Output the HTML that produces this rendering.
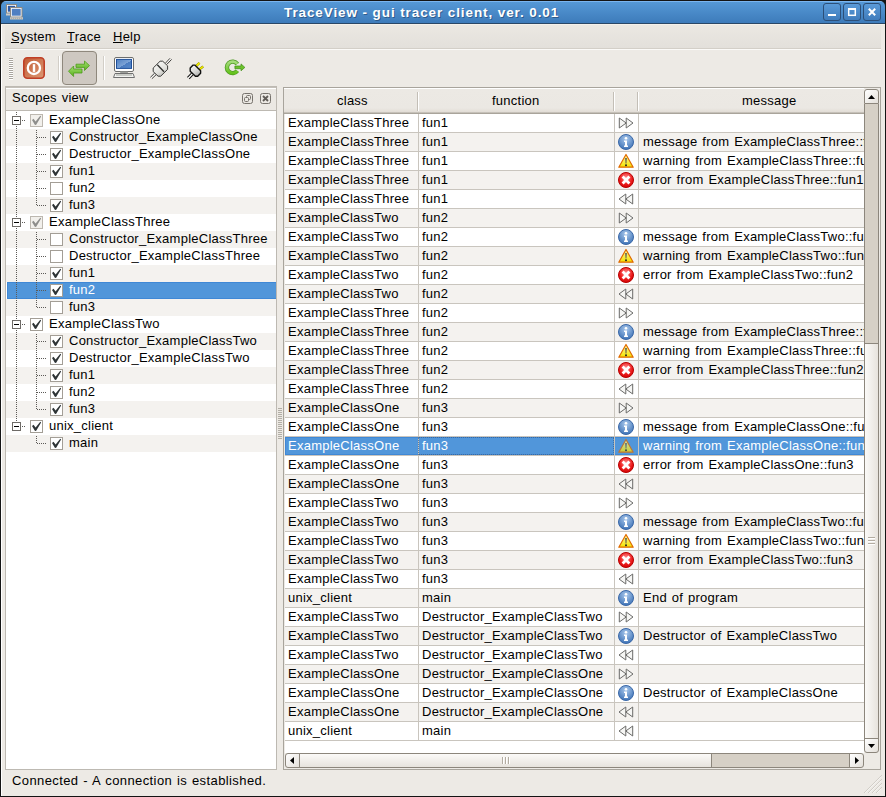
<!DOCTYPE html><html><head><meta charset="utf-8"><title>TraceView</title><style>
*{margin:0;padding:0;box-sizing:border-box}
html,body{width:886px;height:797px;overflow:hidden;background:#141414}
body{position:relative;font-family:"Liberation Sans",sans-serif;font-size:13px;color:#000;letter-spacing:0.25px;word-spacing:1px}
.a{position:absolute}
.t{position:absolute;white-space:pre;line-height:15px}
svg{position:absolute;overflow:visible}
.cb{position:absolute;width:13px;height:13px;border:1px solid #a39e96;background:#fff}
.cbg{position:absolute;width:13px;height:13px;border:1px solid #bdb8b0;background:#f2f0ec}
</style></head><body><div class="a" style="left:1px;top:24px;width:884px;height:772px;background:#edeae5"></div>
<div class="a" style="left:1px;top:24px;width:1px;height:772px;background:#fff"></div>
<div class="a" style="left:1px;top:1px;width:884px;height:23px;border-radius:5px 5px 0 0;background:linear-gradient(#7ab5ef 0,#7ab5ef 1px,#5598d6 1px,#3d7bba 22px,#2a4766 22px)"></div>
<div class="t" style="left:284px;top:5px;font-weight:bold;font-size:13.5px;color:#fff;letter-spacing:0.9px;word-spacing:0px;line-height:16px;text-shadow:1px 1px 0 rgba(20,40,70,0.45)">TraceView - gui tracer client, ver. 0.01</div>
<div class="a" style="left:823px;top:3px;width:18px;height:18px;border:1px solid #2c4f78;border-radius:3px;background:linear-gradient(#5a9ad8,#3f7cbc)"></div>
<div class="a" style="left:843px;top:3px;width:18px;height:18px;border:1px solid #2c4f78;border-radius:3px;background:linear-gradient(#5a9ad8,#3f7cbc)"></div>
<div class="a" style="left:863px;top:3px;width:18px;height:18px;border:1px solid #2c4f78;border-radius:3px;background:linear-gradient(#5a9ad8,#3f7cbc)"></div>
<div class="a" style="left:828px;top:14px;width:8px;height:2px;background:#fff"></div>
<svg style="left:848px;top:8px" width="8" height="8"><rect x="0.7" y="0.9" width="6.6" height="6.4" fill="none" stroke="#fff" stroke-width="1.5"/><path d="M0 1H8" stroke="#fff" stroke-width="2"/></svg>
<svg style="left:868px;top:8px" width="8" height="8"><path d="M0.8 0.8L7.2 7.2M7.2 0.8L0.8 7.2" stroke="#fff" stroke-width="2"/></svg>
<svg style="left:6px;top:4px" width="17" height="16" viewBox="0 0 17 16">
<rect x="0.5" y="0.5" width="10" height="8.5" fill="#fff" stroke="#8d8982"/><rect x="1.8" y="1.8" width="7.4" height="5.9" fill="#2c5aa6"/>
<rect x="0" y="9.5" width="5" height="2" fill="#cfcbc3"/>
<rect x="4.5" y="3.5" width="11.5" height="9.5" fill="#fff" stroke="#8d8982"/><rect x="5.8" y="4.8" width="8.9" height="6.9" fill="#4f7fc2"/>
<rect x="4" y="13.2" width="13" height="2.3" fill="#c9c5bd"/><path d="M5 14.3H16" stroke="#9a968f" stroke-width="0.6" stroke-dasharray="1 1"/></svg>
<div class="a" style="left:1px;top:24px;width:884px;height:1px;background:#f5f1ea"></div>
<div class="a" style="left:5px;top:25px;width:876px;height:25px;background:linear-gradient(#ebe8e2 0,#e3e0db 23px,#d3cfc8 23px,#d3cfc8 24px,#fbfaf8 24px)"></div>
<div class="t" style="left:11px;top:29px">System</div>
<div class="a" style="left:11px;top:42px;width:8px;height:1px;background:#000"></div>
<div class="t" style="left:67px;top:29px">Trace</div>
<div class="a" style="left:67px;top:42px;width:7px;height:1px;background:#000"></div>
<div class="t" style="left:113px;top:29px">Help</div>
<div class="a" style="left:113px;top:42px;width:10px;height:1px;background:#000"></div>
<div class="a" style="left:9px;top:58px;width:4px;height:1px;background:#a9a59e"></div><div class="a" style="left:9px;top:59px;width:4px;height:1px;background:#fff"></div><div class="a" style="left:9px;top:60px;width:4px;height:1px;background:#a9a59e"></div><div class="a" style="left:9px;top:61px;width:4px;height:1px;background:#fff"></div><div class="a" style="left:9px;top:62px;width:4px;height:1px;background:#a9a59e"></div><div class="a" style="left:9px;top:63px;width:4px;height:1px;background:#fff"></div><div class="a" style="left:9px;top:64px;width:4px;height:1px;background:#a9a59e"></div><div class="a" style="left:9px;top:65px;width:4px;height:1px;background:#fff"></div><div class="a" style="left:9px;top:66px;width:4px;height:1px;background:#a9a59e"></div><div class="a" style="left:9px;top:67px;width:4px;height:1px;background:#fff"></div><div class="a" style="left:9px;top:68px;width:4px;height:1px;background:#a9a59e"></div><div class="a" style="left:9px;top:69px;width:4px;height:1px;background:#fff"></div><div class="a" style="left:9px;top:70px;width:4px;height:1px;background:#a9a59e"></div><div class="a" style="left:9px;top:71px;width:4px;height:1px;background:#fff"></div><div class="a" style="left:9px;top:72px;width:4px;height:1px;background:#a9a59e"></div><div class="a" style="left:9px;top:73px;width:4px;height:1px;background:#fff"></div><div class="a" style="left:9px;top:74px;width:4px;height:1px;background:#a9a59e"></div><div class="a" style="left:9px;top:75px;width:4px;height:1px;background:#fff"></div><div class="a" style="left:9px;top:76px;width:4px;height:1px;background:#a9a59e"></div><div class="a" style="left:9px;top:77px;width:4px;height:1px;background:#fff"></div><div class="a" style="left:9px;top:78px;width:4px;height:1px;background:#a9a59e"></div><div class="a" style="left:9px;top:79px;width:4px;height:1px;background:#fff"></div>
<div class="a" style="left:58px;top:56px;width:1px;height:24px;background:#d2cec7"></div><div class="a" style="left:59px;top:56px;width:1px;height:24px;background:#fff"></div>
<div class="a" style="left:103px;top:56px;width:1px;height:24px;background:#d2cec7"></div><div class="a" style="left:104px;top:56px;width:1px;height:24px;background:#fff"></div>
<div class="a" style="left:62px;top:51px;width:35px;height:34px;border:1px solid #8f887d;border-radius:4px;background:#cec8c1"></div>
<svg style="left:23px;top:57px" width="22" height="22" viewBox="0 0 22 22">
<defs><linearGradient id="pw" x1="0" y1="0" x2="1" y2="1"><stop offset="0" stop-color="#c25a33"/><stop offset="1" stop-color="#dc9a76"/></linearGradient></defs>
<rect x="0.8" y="0.8" width="20.4" height="20.4" rx="3.5" fill="url(#pw)" stroke="#c03f26" stroke-width="1.6"/>
<circle cx="10.9" cy="10.9" r="6.1" fill="none" stroke="#fff" stroke-width="2.3"/>
<rect x="9.8" y="7.2" width="2.4" height="7.7" fill="#fff"/></svg>
<svg style="left:68px;top:57px" width="22" height="22" viewBox="0 0 22 22">
<defs><linearGradient id="ag" x1="0" y1="0" x2="0" y2="1"><stop offset="0" stop-color="#a4e070"/><stop offset="1" stop-color="#58b01e"/></linearGradient></defs>
<path d="M8 7.2H16.5V4L21.5 8.6L16.5 13.5V10.4H8Z" fill="url(#ag)" stroke="#4c9a1a" stroke-width="0.8" stroke-linejoin="round"/>
<path d="M14 12H5.6V9L0.5 14.2L5.6 19.5V16H14Z" fill="url(#ag)" stroke="#4c9a1a" stroke-width="0.8" stroke-linejoin="round"/></svg>
<svg style="left:113px;top:57px" width="22" height="22" viewBox="0 0 22 22">
<defs><linearGradient id="scr" x1="0" y1="0" x2="1" y2="1"><stop offset="0" stop-color="#4f7fc0"/><stop offset="0.55" stop-color="#7ca3d6"/><stop offset="0.56" stop-color="#4b7cc0"/><stop offset="1" stop-color="#5a8ccc"/></linearGradient></defs>
<rect x="1.5" y="0.5" width="19" height="14" rx="1.5" fill="#fff" stroke="#6e6e6c"/>
<rect x="3.5" y="2.4" width="15" height="9" fill="url(#scr)" stroke="#1f4f9a"/>
<rect x="7.2" y="14.5" width="7.7" height="1.6" fill="#9a9c98"/>
<path d="M2 16.5H20L21.5 20.5H0.5Z" fill="#f4f4f2" stroke="#707070"/>
<path d="M3 18H19" stroke="#b6b9b4" stroke-width="1.4"/></svg>
<svg style="left:150px;top:57px" width="22" height="22" viewBox="0 0 22 22">
<defs><linearGradient id="plg" x1="0.2" y1="0" x2="0.8" y2="1"><stop offset="0" stop-color="#fbfbf9"/><stop offset="0.6" stop-color="#e2e2de"/><stop offset="1" stop-color="#b4b4b0"/></linearGradient></defs>
<path d="M15.6 6L20 1.3M16.9 7.3L21.6 2.4M0.4 20.3L4.6 16.2M1.9 21.7L6 17.8" stroke="#3f3f3d" stroke-width="1"/>
<path d="M16.2 6.7L20.8 1.9M1.1 21L5.3 17" stroke="#fff" stroke-width="0.7"/>
<path d="M10.1 4.2L12.7 4.2L17.6 8.8L17.6 12.4L10.7 19.2L8.1 19.2L3.2 14.6L3.2 11Z" fill="url(#plg)" stroke="#3c3c3a" stroke-width="1"/>
<path d="M7.3 7.8L14 14.8" stroke="#2e2e2c" stroke-width="1.3"/></svg>
<svg style="left:186px;top:57px" width="22" height="22" viewBox="0 0 22 22">
<defs><linearGradient id="plg2" x1="0.2" y1="0" x2="0.8" y2="1"><stop offset="0" stop-color="#f4f4f2"/><stop offset="0.6" stop-color="#d4d4d2"/><stop offset="1" stop-color="#a8a8a6"/></linearGradient></defs>
<path d="M1.4 20.4L5.5 16.2M3.2 21.8L7 17.8" stroke="#1a1a1a" stroke-width="1.1"/>
<path d="M2.3 21.1L6.2 17" stroke="#fff" stroke-width="0.8"/>
<path d="M10.1 9.1L13.5 5.9M13.3 12.4L17.2 9.5" stroke="#8a8400" stroke-width="2.4"/>
<path d="M10.1 9.1L13.5 5.9M13.3 12.4L17.2 9.5" stroke="#f2f000" stroke-width="1.5"/>
<path d="M7.1 8.1L8.8 8.1L14.6 13.7L14.6 16.3L11.7 19.2L9.4 19.2L4.2 14.3L4.2 11Z" fill="url(#plg2)" stroke="#111" stroke-width="1.4" stroke-linejoin="round"/></svg>
<svg style="left:224px;top:57px" width="22" height="22" viewBox="0 0 22 22">
<defs><linearGradient id="rg" x1="0" y1="0" x2="0" y2="1"><stop offset="0" stop-color="#a6dc7c"/><stop offset="1" stop-color="#64c21c"/></linearGradient></defs>
<path d="M13.3 7A5.75 5.75 0 1 0 13.3 13.8" fill="none" stroke="#4d9a22" stroke-width="4.4"/>
<path d="M13.3 7A5.75 5.75 0 1 0 13.3 13.8" fill="none" stroke="url(#rg)" stroke-width="2.9"/>
<path d="M10.9 9H17V6.9L20.9 10.4L17 13.8V11.7H10.9Z" fill="#6cc22c" stroke="#3f8c16" stroke-width="0.7" stroke-linejoin="round"/></svg>
<div class="a" style="left:5px;top:86px;width:272px;height:684px;background:#bdb9b2"></div>
<div class="a" style="left:6px;top:87px;width:270px;height:23px;background:linear-gradient(#c4c0b9 0,#c4c0b9 1px,#fff 1px,#fff 2px,#ebe8e3 2px)"></div>
<div class="t" style="left:12px;top:90px">Scopes view</div>
<svg style="left:242px;top:93px" width="11" height="11" viewBox="0 0 11 11">
<rect x="0.5" y="0.5" width="10" height="10" rx="2" fill="none" stroke="#77736d"/>
<rect x="4.5" y="2.5" width="4" height="4" rx="1" fill="none" stroke="#77736d"/><rect x="2.5" y="4.5" width="4" height="4" rx="1" fill="#ebe8e3" stroke="#77736d"/></svg>
<svg style="left:260px;top:93px" width="11" height="11" viewBox="0 0 11 11">
<rect x="0.5" y="0.5" width="10" height="10" rx="2" fill="none" stroke="#77736d"/>
<path d="M3 3L8 8M8 3L3 8" stroke="#5f5b56" stroke-width="1.8"/></svg>
<div class="a" style="left:6px;top:111px;width:270px;height:658px;background:#fff;overflow:hidden">
<div class="cbg" style="left:24px;top:3px"><svg style="left:0px;top:0px" width="11" height="11" viewBox="0 0 11 11"><path d="M1 5.1L2.5 3.8L4.6 6.6L9.3 0.8L10.1 1.5L5.2 9.8L4 9.9Z" fill="#8e8e8c"/></svg></div>
<div class="t" style="left:43px;top:1px;color:#000">ExampleClassOne</div>
<div class="a" style="left:0;top:18px;width:270px;height:17px;background:#f4f2ef"></div>
<div class="cb" style="left:44px;top:20px"><svg style="left:0px;top:0px" width="11" height="11" viewBox="0 0 11 11"><path d="M1 5.1L2.5 3.8L4.6 6.6L9.3 0.8L10.1 1.5L5.2 9.8L4 9.9Z" fill="#2e3436"/></svg></div>
<div class="t" style="left:63px;top:18px;color:#000">Constructor_ExampleClassOne</div>
<div class="cb" style="left:44px;top:37px"><svg style="left:0px;top:0px" width="11" height="11" viewBox="0 0 11 11"><path d="M1 5.1L2.5 3.8L4.6 6.6L9.3 0.8L10.1 1.5L5.2 9.8L4 9.9Z" fill="#2e3436"/></svg></div>
<div class="t" style="left:63px;top:35px;color:#000">Destructor_ExampleClassOne</div>
<div class="a" style="left:0;top:52px;width:270px;height:17px;background:#f4f2ef"></div>
<div class="cb" style="left:44px;top:54px"><svg style="left:0px;top:0px" width="11" height="11" viewBox="0 0 11 11"><path d="M1 5.1L2.5 3.8L4.6 6.6L9.3 0.8L10.1 1.5L5.2 9.8L4 9.9Z" fill="#2e3436"/></svg></div>
<div class="t" style="left:63px;top:52px;color:#000">fun1</div>
<div class="cb" style="left:44px;top:71px"></div>
<div class="t" style="left:63px;top:69px;color:#000">fun2</div>
<div class="a" style="left:0;top:86px;width:270px;height:17px;background:#f4f2ef"></div>
<div class="cb" style="left:44px;top:88px"><svg style="left:0px;top:0px" width="11" height="11" viewBox="0 0 11 11"><path d="M1 5.1L2.5 3.8L4.6 6.6L9.3 0.8L10.1 1.5L5.2 9.8L4 9.9Z" fill="#2e3436"/></svg></div>
<div class="t" style="left:63px;top:86px;color:#000">fun3</div>
<div class="cbg" style="left:24px;top:105px"><svg style="left:0px;top:0px" width="11" height="11" viewBox="0 0 11 11"><path d="M1 5.1L2.5 3.8L4.6 6.6L9.3 0.8L10.1 1.5L5.2 9.8L4 9.9Z" fill="#8e8e8c"/></svg></div>
<div class="t" style="left:43px;top:103px;color:#000">ExampleClassThree</div>
<div class="a" style="left:0;top:120px;width:270px;height:17px;background:#f4f2ef"></div>
<div class="cb" style="left:44px;top:122px"></div>
<div class="t" style="left:63px;top:120px;color:#000">Constructor_ExampleClassThree</div>
<div class="cb" style="left:44px;top:139px"></div>
<div class="t" style="left:63px;top:137px;color:#000">Destructor_ExampleClassThree</div>
<div class="a" style="left:0;top:154px;width:270px;height:17px;background:#f4f2ef"></div>
<div class="cb" style="left:44px;top:156px"><svg style="left:0px;top:0px" width="11" height="11" viewBox="0 0 11 11"><path d="M1 5.1L2.5 3.8L4.6 6.6L9.3 0.8L10.1 1.5L5.2 9.8L4 9.9Z" fill="#2e3436"/></svg></div>
<div class="t" style="left:63px;top:154px;color:#000">fun1</div>
<div class="a" style="left:1px;top:171px;width:269px;height:17px;background:#5196da;border:1px solid #3f88d6;border-right:0"></div>
<div class="cb" style="left:44px;top:173px"><svg style="left:0px;top:0px" width="11" height="11" viewBox="0 0 11 11"><path d="M1 5.1L2.5 3.8L4.6 6.6L9.3 0.8L10.1 1.5L5.2 9.8L4 9.9Z" fill="#2e3436"/></svg></div>
<div class="t" style="left:63px;top:171px;color:#fff">fun2</div>
<div class="a" style="left:0;top:188px;width:270px;height:17px;background:#f4f2ef"></div>
<div class="cb" style="left:44px;top:190px"></div>
<div class="t" style="left:63px;top:188px;color:#000">fun3</div>
<div class="cb" style="left:24px;top:207px"><svg style="left:0px;top:0px" width="11" height="11" viewBox="0 0 11 11"><path d="M1 5.1L2.5 3.8L4.6 6.6L9.3 0.8L10.1 1.5L5.2 9.8L4 9.9Z" fill="#2e3436"/></svg></div>
<div class="t" style="left:43px;top:205px;color:#000">ExampleClassTwo</div>
<div class="a" style="left:0;top:222px;width:270px;height:17px;background:#f4f2ef"></div>
<div class="cb" style="left:44px;top:224px"><svg style="left:0px;top:0px" width="11" height="11" viewBox="0 0 11 11"><path d="M1 5.1L2.5 3.8L4.6 6.6L9.3 0.8L10.1 1.5L5.2 9.8L4 9.9Z" fill="#2e3436"/></svg></div>
<div class="t" style="left:63px;top:222px;color:#000">Constructor_ExampleClassTwo</div>
<div class="cb" style="left:44px;top:241px"><svg style="left:0px;top:0px" width="11" height="11" viewBox="0 0 11 11"><path d="M1 5.1L2.5 3.8L4.6 6.6L9.3 0.8L10.1 1.5L5.2 9.8L4 9.9Z" fill="#2e3436"/></svg></div>
<div class="t" style="left:63px;top:239px;color:#000">Destructor_ExampleClassTwo</div>
<div class="a" style="left:0;top:256px;width:270px;height:17px;background:#f4f2ef"></div>
<div class="cb" style="left:44px;top:258px"><svg style="left:0px;top:0px" width="11" height="11" viewBox="0 0 11 11"><path d="M1 5.1L2.5 3.8L4.6 6.6L9.3 0.8L10.1 1.5L5.2 9.8L4 9.9Z" fill="#2e3436"/></svg></div>
<div class="t" style="left:63px;top:256px;color:#000">fun1</div>
<div class="cb" style="left:44px;top:275px"><svg style="left:0px;top:0px" width="11" height="11" viewBox="0 0 11 11"><path d="M1 5.1L2.5 3.8L4.6 6.6L9.3 0.8L10.1 1.5L5.2 9.8L4 9.9Z" fill="#2e3436"/></svg></div>
<div class="t" style="left:63px;top:273px;color:#000">fun2</div>
<div class="a" style="left:0;top:290px;width:270px;height:17px;background:#f4f2ef"></div>
<div class="cb" style="left:44px;top:292px"><svg style="left:0px;top:0px" width="11" height="11" viewBox="0 0 11 11"><path d="M1 5.1L2.5 3.8L4.6 6.6L9.3 0.8L10.1 1.5L5.2 9.8L4 9.9Z" fill="#2e3436"/></svg></div>
<div class="t" style="left:63px;top:290px;color:#000">fun3</div>
<div class="cb" style="left:24px;top:309px"><svg style="left:0px;top:0px" width="11" height="11" viewBox="0 0 11 11"><path d="M1 5.1L2.5 3.8L4.6 6.6L9.3 0.8L10.1 1.5L5.2 9.8L4 9.9Z" fill="#2e3436"/></svg></div>
<div class="t" style="left:43px;top:307px;color:#000">unix_client</div>
<div class="a" style="left:0;top:324px;width:270px;height:17px;background:#f4f2ef"></div>
<div class="cb" style="left:44px;top:326px"><svg style="left:0px;top:0px" width="11" height="11" viewBox="0 0 11 11"><path d="M1 5.1L2.5 3.8L4.6 6.6L9.3 0.8L10.1 1.5L5.2 9.8L4 9.9Z" fill="#2e3436"/></svg></div>
<div class="t" style="left:63px;top:324px;color:#000">main</div>
<div class="a" style="left:10px;top:1px;width:1px;height:313px;background:repeating-linear-gradient(#5c5a57 0 1px,transparent 1px 2px)"></div>
<div class="a" style="left:16px;top:9px;width:4px;height:1px;background:repeating-linear-gradient(90deg,#5c5a57 0 1px,transparent 1px 2px)"></div>
<div class="a" style="left:6px;top:5px;width:9px;height:9px;border:1px solid #6e6b67;background:#fff"><div class="a" style="left:1px;top:3px;width:5px;height:1px;background:#000"></div></div>
<div class="a" style="left:30px;top:19px;width:1px;height:75px;background:repeating-linear-gradient(#5c5a57 0 1px,transparent 1px 2px)"></div>
<div class="a" style="left:31px;top:26px;width:10px;height:1px;background:repeating-linear-gradient(90deg,#5c5a57 0 1px,transparent 1px 2px)"></div>
<div class="a" style="left:31px;top:43px;width:10px;height:1px;background:repeating-linear-gradient(90deg,#5c5a57 0 1px,transparent 1px 2px)"></div>
<div class="a" style="left:31px;top:60px;width:10px;height:1px;background:repeating-linear-gradient(90deg,#5c5a57 0 1px,transparent 1px 2px)"></div>
<div class="a" style="left:31px;top:77px;width:10px;height:1px;background:repeating-linear-gradient(90deg,#5c5a57 0 1px,transparent 1px 2px)"></div>
<div class="a" style="left:31px;top:94px;width:10px;height:1px;background:repeating-linear-gradient(90deg,#5c5a57 0 1px,transparent 1px 2px)"></div>
<div class="a" style="left:16px;top:111px;width:4px;height:1px;background:repeating-linear-gradient(90deg,#5c5a57 0 1px,transparent 1px 2px)"></div>
<div class="a" style="left:6px;top:107px;width:9px;height:9px;border:1px solid #6e6b67;background:#fff"><div class="a" style="left:1px;top:3px;width:5px;height:1px;background:#000"></div></div>
<div class="a" style="left:30px;top:121px;width:1px;height:75px;background:repeating-linear-gradient(#5c5a57 0 1px,transparent 1px 2px)"></div>
<div class="a" style="left:31px;top:128px;width:10px;height:1px;background:repeating-linear-gradient(90deg,#5c5a57 0 1px,transparent 1px 2px)"></div>
<div class="a" style="left:31px;top:145px;width:10px;height:1px;background:repeating-linear-gradient(90deg,#5c5a57 0 1px,transparent 1px 2px)"></div>
<div class="a" style="left:31px;top:162px;width:10px;height:1px;background:repeating-linear-gradient(90deg,#5c5a57 0 1px,transparent 1px 2px)"></div>
<div class="a" style="left:31px;top:179px;width:10px;height:1px;background:repeating-linear-gradient(90deg,#5c5a57 0 1px,transparent 1px 2px)"></div>
<div class="a" style="left:31px;top:196px;width:10px;height:1px;background:repeating-linear-gradient(90deg,#5c5a57 0 1px,transparent 1px 2px)"></div>
<div class="a" style="left:16px;top:213px;width:4px;height:1px;background:repeating-linear-gradient(90deg,#5c5a57 0 1px,transparent 1px 2px)"></div>
<div class="a" style="left:6px;top:209px;width:9px;height:9px;border:1px solid #6e6b67;background:#fff"><div class="a" style="left:1px;top:3px;width:5px;height:1px;background:#000"></div></div>
<div class="a" style="left:30px;top:223px;width:1px;height:75px;background:repeating-linear-gradient(#5c5a57 0 1px,transparent 1px 2px)"></div>
<div class="a" style="left:31px;top:230px;width:10px;height:1px;background:repeating-linear-gradient(90deg,#5c5a57 0 1px,transparent 1px 2px)"></div>
<div class="a" style="left:31px;top:247px;width:10px;height:1px;background:repeating-linear-gradient(90deg,#5c5a57 0 1px,transparent 1px 2px)"></div>
<div class="a" style="left:31px;top:264px;width:10px;height:1px;background:repeating-linear-gradient(90deg,#5c5a57 0 1px,transparent 1px 2px)"></div>
<div class="a" style="left:31px;top:281px;width:10px;height:1px;background:repeating-linear-gradient(90deg,#5c5a57 0 1px,transparent 1px 2px)"></div>
<div class="a" style="left:31px;top:298px;width:10px;height:1px;background:repeating-linear-gradient(90deg,#5c5a57 0 1px,transparent 1px 2px)"></div>
<div class="a" style="left:16px;top:315px;width:4px;height:1px;background:repeating-linear-gradient(90deg,#5c5a57 0 1px,transparent 1px 2px)"></div>
<div class="a" style="left:6px;top:311px;width:9px;height:9px;border:1px solid #6e6b67;background:#fff"><div class="a" style="left:1px;top:3px;width:5px;height:1px;background:#000"></div></div>
<div class="a" style="left:30px;top:325px;width:1px;height:7px;background:repeating-linear-gradient(#5c5a57 0 1px,transparent 1px 2px)"></div>
<div class="a" style="left:31px;top:332px;width:10px;height:1px;background:repeating-linear-gradient(90deg,#5c5a57 0 1px,transparent 1px 2px)"></div>
</div>
<div class="a" style="left:278px;top:408px;width:4px;height:1px;background:#b2aea6"></div>
<div class="a" style="left:278px;top:410px;width:4px;height:1px;background:#b2aea6"></div>
<div class="a" style="left:278px;top:412px;width:4px;height:1px;background:#b2aea6"></div>
<div class="a" style="left:278px;top:414px;width:4px;height:1px;background:#b2aea6"></div>
<div class="a" style="left:278px;top:416px;width:4px;height:1px;background:#b2aea6"></div>
<div class="a" style="left:278px;top:418px;width:4px;height:1px;background:#b2aea6"></div>
<div class="a" style="left:278px;top:420px;width:4px;height:1px;background:#b2aea6"></div>
<div class="a" style="left:278px;top:422px;width:4px;height:1px;background:#b2aea6"></div>
<div class="a" style="left:278px;top:424px;width:4px;height:1px;background:#b2aea6"></div>
<div class="a" style="left:278px;top:426px;width:4px;height:1px;background:#b2aea6"></div>
<div class="a" style="left:278px;top:428px;width:4px;height:1px;background:#b2aea6"></div>
<div class="a" style="left:278px;top:430px;width:4px;height:1px;background:#b2aea6"></div>
<div class="a" style="left:278px;top:432px;width:4px;height:1px;background:#b2aea6"></div>
<div class="a" style="left:278px;top:434px;width:4px;height:1px;background:#b2aea6"></div>
<div class="a" style="left:278px;top:436px;width:4px;height:1px;background:#b2aea6"></div>
<div class="a" style="left:278px;top:438px;width:4px;height:1px;background:#b2aea6"></div>
<div class="a" style="left:283px;top:87px;width:598px;height:683px;background:#a8a49c"></div>
<div class="a" style="left:284px;top:88px;width:596px;height:681px;background:#edeae5"></div>
<div class="a" style="left:284px;top:88px;width:580px;height:26px;background:linear-gradient(#fff 0,#fff 1px,#ece9e4 1px,#ebe8e3 20px,#e2ddd6 24px,#a9a49b 25px)"></div>
<div class="t" style="left:337px;top:93px">class</div>
<div class="t" style="left:492px;top:93px">function</div>
<div class="t" style="left:742px;top:93px">message</div>
<div class="a" style="left:417px;top:92px;width:1px;height:19px;background:#c3beb6"></div><div class="a" style="left:418px;top:92px;width:1px;height:19px;background:#fff"></div>
<div class="a" style="left:613px;top:92px;width:1px;height:19px;background:#c3beb6"></div><div class="a" style="left:614px;top:92px;width:1px;height:19px;background:#fff"></div>
<div class="a" style="left:637px;top:92px;width:1px;height:19px;background:#c3beb6"></div><div class="a" style="left:638px;top:92px;width:1px;height:19px;background:#fff"></div>
<div class="a" style="left:285px;top:114px;width:579px;height:639px;background:#fff;overflow:hidden">
<div class="a" style="left:0;top:0px;width:579px;height:18px;background:#fff"></div>
<div class="a" style="left:0;top:18px;width:579px;height:1px;background:#c9c5be"></div>
<div class="t" style="left:3px;top:1px;color:#000">ExampleClassThree</div>
<div class="t" style="left:137px;top:1px;color:#000">fun1</div>
<svg style="left:333px;top:1px" width="16" height="16" viewBox="0 0 16 16"><path d="M1.3 3L8.2 8L1.3 13Z M8.2 3L15 8L8.2 13Z" fill="#f6f6f4" stroke="#6a6a68" stroke-width="1" stroke-linejoin="round"/></svg>
<div class="a" style="left:0;top:19px;width:579px;height:18px;background:#f4f2ef"></div>
<div class="a" style="left:0;top:37px;width:579px;height:1px;background:#c9c5be"></div>
<div class="t" style="left:3px;top:20px;color:#000">ExampleClassThree</div>
<div class="t" style="left:137px;top:20px;color:#000">fun1</div>
<svg style="left:333px;top:20px" width="16" height="16" viewBox="0 0 16 16"><defs><radialGradient id="ig" cx="0.5" cy="0.3" r="0.7"><stop offset="0" stop-color="#a9c8ec"/><stop offset="1" stop-color="#3f73b6"/></radialGradient></defs><circle cx="8" cy="8" r="7.5" fill="url(#ig)" stroke="#3a68a8" stroke-width="1"/><circle cx="8" cy="4.3" r="1.3" fill="#fff"/><path d="M6 6.5H9V11.5H10V13H6V11.5H7V8H6Z" fill="#fff"/></svg>
<div class="t" style="left:358px;top:20px;color:#000">message from ExampleClassThree::fun1</div>
<div class="a" style="left:0;top:38px;width:579px;height:18px;background:#fff"></div>
<div class="a" style="left:0;top:56px;width:579px;height:1px;background:#c9c5be"></div>
<div class="t" style="left:3px;top:39px;color:#000">ExampleClassThree</div>
<div class="t" style="left:137px;top:39px;color:#000">fun1</div>
<svg style="left:333px;top:39px" width="16" height="16" viewBox="0 0 16 16"><defs><linearGradient id="wg" x1="0" y1="0" x2="0" y2="1"><stop offset="0" stop-color="#fff7a0"/><stop offset="1" stop-color="#f2e300"/></linearGradient></defs><path d="M8 1.5L15.2 14.2H0.8Z" fill="url(#wg)" stroke="#e06a00" stroke-width="1.2" stroke-linejoin="round"/><path d="M7.2 5H8.8L8.4 10.5H7.6Z" fill="#555"/><circle cx="8" cy="12.3" r="1" fill="#222"/></svg>
<div class="t" style="left:358px;top:39px;color:#000">warning from ExampleClassThree::fun1</div>
<div class="a" style="left:0;top:57px;width:579px;height:18px;background:#f4f2ef"></div>
<div class="a" style="left:0;top:75px;width:579px;height:1px;background:#c9c5be"></div>
<div class="t" style="left:3px;top:58px;color:#000">ExampleClassThree</div>
<div class="t" style="left:137px;top:58px;color:#000">fun1</div>
<svg style="left:333px;top:58px" width="16" height="16" viewBox="0 0 16 16"><defs><radialGradient id="eg" cx="0.5" cy="0.35" r="0.7"><stop offset="0" stop-color="#ff9090"/><stop offset="0.6" stop-color="#ec1c1c"/><stop offset="1" stop-color="#d00000"/></radialGradient></defs><circle cx="8" cy="8" r="7.5" fill="url(#eg)" stroke="#b80000" stroke-width="1"/><path d="M4.6 4.6L11.4 11.4M11.4 4.6L4.6 11.4" stroke="#fff" stroke-width="2.8"/></svg>
<div class="t" style="left:358px;top:58px;color:#000">error from ExampleClassThree::fun1</div>
<div class="a" style="left:0;top:76px;width:579px;height:18px;background:#fff"></div>
<div class="a" style="left:0;top:94px;width:579px;height:1px;background:#c9c5be"></div>
<div class="t" style="left:3px;top:77px;color:#000">ExampleClassThree</div>
<div class="t" style="left:137px;top:77px;color:#000">fun1</div>
<svg style="left:333px;top:77px" width="16" height="16" viewBox="0 0 16 16"><path d="M14.7 3L7.8 8L14.7 13Z M7.8 3L1 8L7.8 13Z" fill="#f6f6f4" stroke="#6a6a68" stroke-width="1" stroke-linejoin="round"/></svg>
<div class="a" style="left:0;top:95px;width:579px;height:18px;background:#f4f2ef"></div>
<div class="a" style="left:0;top:113px;width:579px;height:1px;background:#c9c5be"></div>
<div class="t" style="left:3px;top:96px;color:#000">ExampleClassTwo</div>
<div class="t" style="left:137px;top:96px;color:#000">fun2</div>
<svg style="left:333px;top:96px" width="16" height="16" viewBox="0 0 16 16"><path d="M1.3 3L8.2 8L1.3 13Z M8.2 3L15 8L8.2 13Z" fill="#f6f6f4" stroke="#6a6a68" stroke-width="1" stroke-linejoin="round"/></svg>
<div class="a" style="left:0;top:114px;width:579px;height:18px;background:#fff"></div>
<div class="a" style="left:0;top:132px;width:579px;height:1px;background:#c9c5be"></div>
<div class="t" style="left:3px;top:115px;color:#000">ExampleClassTwo</div>
<div class="t" style="left:137px;top:115px;color:#000">fun2</div>
<svg style="left:333px;top:115px" width="16" height="16" viewBox="0 0 16 16"><defs><radialGradient id="ig" cx="0.5" cy="0.3" r="0.7"><stop offset="0" stop-color="#a9c8ec"/><stop offset="1" stop-color="#3f73b6"/></radialGradient></defs><circle cx="8" cy="8" r="7.5" fill="url(#ig)" stroke="#3a68a8" stroke-width="1"/><circle cx="8" cy="4.3" r="1.3" fill="#fff"/><path d="M6 6.5H9V11.5H10V13H6V11.5H7V8H6Z" fill="#fff"/></svg>
<div class="t" style="left:358px;top:115px;color:#000">message from ExampleClassTwo::fun2</div>
<div class="a" style="left:0;top:133px;width:579px;height:18px;background:#f4f2ef"></div>
<div class="a" style="left:0;top:151px;width:579px;height:1px;background:#c9c5be"></div>
<div class="t" style="left:3px;top:134px;color:#000">ExampleClassTwo</div>
<div class="t" style="left:137px;top:134px;color:#000">fun2</div>
<svg style="left:333px;top:134px" width="16" height="16" viewBox="0 0 16 16"><defs><linearGradient id="wg" x1="0" y1="0" x2="0" y2="1"><stop offset="0" stop-color="#fff7a0"/><stop offset="1" stop-color="#f2e300"/></linearGradient></defs><path d="M8 1.5L15.2 14.2H0.8Z" fill="url(#wg)" stroke="#e06a00" stroke-width="1.2" stroke-linejoin="round"/><path d="M7.2 5H8.8L8.4 10.5H7.6Z" fill="#555"/><circle cx="8" cy="12.3" r="1" fill="#222"/></svg>
<div class="t" style="left:358px;top:134px;color:#000">warning from ExampleClassTwo::fun2</div>
<div class="a" style="left:0;top:152px;width:579px;height:18px;background:#fff"></div>
<div class="a" style="left:0;top:170px;width:579px;height:1px;background:#c9c5be"></div>
<div class="t" style="left:3px;top:153px;color:#000">ExampleClassTwo</div>
<div class="t" style="left:137px;top:153px;color:#000">fun2</div>
<svg style="left:333px;top:153px" width="16" height="16" viewBox="0 0 16 16"><defs><radialGradient id="eg" cx="0.5" cy="0.35" r="0.7"><stop offset="0" stop-color="#ff9090"/><stop offset="0.6" stop-color="#ec1c1c"/><stop offset="1" stop-color="#d00000"/></radialGradient></defs><circle cx="8" cy="8" r="7.5" fill="url(#eg)" stroke="#b80000" stroke-width="1"/><path d="M4.6 4.6L11.4 11.4M11.4 4.6L4.6 11.4" stroke="#fff" stroke-width="2.8"/></svg>
<div class="t" style="left:358px;top:153px;color:#000">error from ExampleClassTwo::fun2</div>
<div class="a" style="left:0;top:171px;width:579px;height:18px;background:#f4f2ef"></div>
<div class="a" style="left:0;top:189px;width:579px;height:1px;background:#c9c5be"></div>
<div class="t" style="left:3px;top:172px;color:#000">ExampleClassTwo</div>
<div class="t" style="left:137px;top:172px;color:#000">fun2</div>
<svg style="left:333px;top:172px" width="16" height="16" viewBox="0 0 16 16"><path d="M14.7 3L7.8 8L14.7 13Z M7.8 3L1 8L7.8 13Z" fill="#f6f6f4" stroke="#6a6a68" stroke-width="1" stroke-linejoin="round"/></svg>
<div class="a" style="left:0;top:190px;width:579px;height:18px;background:#fff"></div>
<div class="a" style="left:0;top:208px;width:579px;height:1px;background:#c9c5be"></div>
<div class="t" style="left:3px;top:191px;color:#000">ExampleClassThree</div>
<div class="t" style="left:137px;top:191px;color:#000">fun2</div>
<svg style="left:333px;top:191px" width="16" height="16" viewBox="0 0 16 16"><path d="M1.3 3L8.2 8L1.3 13Z M8.2 3L15 8L8.2 13Z" fill="#f6f6f4" stroke="#6a6a68" stroke-width="1" stroke-linejoin="round"/></svg>
<div class="a" style="left:0;top:209px;width:579px;height:18px;background:#f4f2ef"></div>
<div class="a" style="left:0;top:227px;width:579px;height:1px;background:#c9c5be"></div>
<div class="t" style="left:3px;top:210px;color:#000">ExampleClassThree</div>
<div class="t" style="left:137px;top:210px;color:#000">fun2</div>
<svg style="left:333px;top:210px" width="16" height="16" viewBox="0 0 16 16"><defs><radialGradient id="ig" cx="0.5" cy="0.3" r="0.7"><stop offset="0" stop-color="#a9c8ec"/><stop offset="1" stop-color="#3f73b6"/></radialGradient></defs><circle cx="8" cy="8" r="7.5" fill="url(#ig)" stroke="#3a68a8" stroke-width="1"/><circle cx="8" cy="4.3" r="1.3" fill="#fff"/><path d="M6 6.5H9V11.5H10V13H6V11.5H7V8H6Z" fill="#fff"/></svg>
<div class="t" style="left:358px;top:210px;color:#000">message from ExampleClassThree::fun2</div>
<div class="a" style="left:0;top:228px;width:579px;height:18px;background:#fff"></div>
<div class="a" style="left:0;top:246px;width:579px;height:1px;background:#c9c5be"></div>
<div class="t" style="left:3px;top:229px;color:#000">ExampleClassThree</div>
<div class="t" style="left:137px;top:229px;color:#000">fun2</div>
<svg style="left:333px;top:229px" width="16" height="16" viewBox="0 0 16 16"><defs><linearGradient id="wg" x1="0" y1="0" x2="0" y2="1"><stop offset="0" stop-color="#fff7a0"/><stop offset="1" stop-color="#f2e300"/></linearGradient></defs><path d="M8 1.5L15.2 14.2H0.8Z" fill="url(#wg)" stroke="#e06a00" stroke-width="1.2" stroke-linejoin="round"/><path d="M7.2 5H8.8L8.4 10.5H7.6Z" fill="#555"/><circle cx="8" cy="12.3" r="1" fill="#222"/></svg>
<div class="t" style="left:358px;top:229px;color:#000">warning from ExampleClassThree::fun2</div>
<div class="a" style="left:0;top:247px;width:579px;height:18px;background:#f4f2ef"></div>
<div class="a" style="left:0;top:265px;width:579px;height:1px;background:#c9c5be"></div>
<div class="t" style="left:3px;top:248px;color:#000">ExampleClassThree</div>
<div class="t" style="left:137px;top:248px;color:#000">fun2</div>
<svg style="left:333px;top:248px" width="16" height="16" viewBox="0 0 16 16"><defs><radialGradient id="eg" cx="0.5" cy="0.35" r="0.7"><stop offset="0" stop-color="#ff9090"/><stop offset="0.6" stop-color="#ec1c1c"/><stop offset="1" stop-color="#d00000"/></radialGradient></defs><circle cx="8" cy="8" r="7.5" fill="url(#eg)" stroke="#b80000" stroke-width="1"/><path d="M4.6 4.6L11.4 11.4M11.4 4.6L4.6 11.4" stroke="#fff" stroke-width="2.8"/></svg>
<div class="t" style="left:358px;top:248px;color:#000">error from ExampleClassThree::fun2</div>
<div class="a" style="left:0;top:266px;width:579px;height:18px;background:#fff"></div>
<div class="a" style="left:0;top:284px;width:579px;height:1px;background:#c9c5be"></div>
<div class="t" style="left:3px;top:267px;color:#000">ExampleClassThree</div>
<div class="t" style="left:137px;top:267px;color:#000">fun2</div>
<svg style="left:333px;top:267px" width="16" height="16" viewBox="0 0 16 16"><path d="M14.7 3L7.8 8L14.7 13Z M7.8 3L1 8L7.8 13Z" fill="#f6f6f4" stroke="#6a6a68" stroke-width="1" stroke-linejoin="round"/></svg>
<div class="a" style="left:0;top:285px;width:579px;height:18px;background:#f4f2ef"></div>
<div class="a" style="left:0;top:303px;width:579px;height:1px;background:#c9c5be"></div>
<div class="t" style="left:3px;top:286px;color:#000">ExampleClassOne</div>
<div class="t" style="left:137px;top:286px;color:#000">fun3</div>
<svg style="left:333px;top:286px" width="16" height="16" viewBox="0 0 16 16"><path d="M1.3 3L8.2 8L1.3 13Z M8.2 3L15 8L8.2 13Z" fill="#f6f6f4" stroke="#6a6a68" stroke-width="1" stroke-linejoin="round"/></svg>
<div class="a" style="left:0;top:304px;width:579px;height:18px;background:#fff"></div>
<div class="a" style="left:0;top:322px;width:579px;height:1px;background:#c9c5be"></div>
<div class="t" style="left:3px;top:305px;color:#000">ExampleClassOne</div>
<div class="t" style="left:137px;top:305px;color:#000">fun3</div>
<svg style="left:333px;top:305px" width="16" height="16" viewBox="0 0 16 16"><defs><radialGradient id="ig" cx="0.5" cy="0.3" r="0.7"><stop offset="0" stop-color="#a9c8ec"/><stop offset="1" stop-color="#3f73b6"/></radialGradient></defs><circle cx="8" cy="8" r="7.5" fill="url(#ig)" stroke="#3a68a8" stroke-width="1"/><circle cx="8" cy="4.3" r="1.3" fill="#fff"/><path d="M6 6.5H9V11.5H10V13H6V11.5H7V8H6Z" fill="#fff"/></svg>
<div class="t" style="left:358px;top:305px;color:#000">message from ExampleClassOne::fun3</div>
<div class="a" style="left:0;top:323px;width:579px;height:18px;background:#5196da;border:1px solid #3f88d6;border-right:0"></div>
<div class="a" style="left:0;top:341px;width:579px;height:1px;background:#c9c5be"></div>
<div class="t" style="left:3px;top:324px;color:#fff">ExampleClassOne</div>
<div class="t" style="left:137px;top:324px;color:#fff">fun3</div>
<svg style="opacity:0.75;left:333px;top:324px" width="16" height="16" viewBox="0 0 16 16"><defs><linearGradient id="wg" x1="0" y1="0" x2="0" y2="1"><stop offset="0" stop-color="#fff7a0"/><stop offset="1" stop-color="#f2e300"/></linearGradient></defs><path d="M8 1.5L15.2 14.2H0.8Z" fill="url(#wg)" stroke="#e06a00" stroke-width="1.2" stroke-linejoin="round"/><path d="M7.2 5H8.8L8.4 10.5H7.6Z" fill="#555"/><circle cx="8" cy="12.3" r="1" fill="#222"/></svg>
<div class="t" style="left:358px;top:324px;color:#fff">warning from ExampleClassOne::fun3</div>
<div class="a" style="left:0;top:342px;width:579px;height:18px;background:#fff"></div>
<div class="a" style="left:0;top:360px;width:579px;height:1px;background:#c9c5be"></div>
<div class="t" style="left:3px;top:343px;color:#000">ExampleClassOne</div>
<div class="t" style="left:137px;top:343px;color:#000">fun3</div>
<svg style="left:333px;top:343px" width="16" height="16" viewBox="0 0 16 16"><defs><radialGradient id="eg" cx="0.5" cy="0.35" r="0.7"><stop offset="0" stop-color="#ff9090"/><stop offset="0.6" stop-color="#ec1c1c"/><stop offset="1" stop-color="#d00000"/></radialGradient></defs><circle cx="8" cy="8" r="7.5" fill="url(#eg)" stroke="#b80000" stroke-width="1"/><path d="M4.6 4.6L11.4 11.4M11.4 4.6L4.6 11.4" stroke="#fff" stroke-width="2.8"/></svg>
<div class="t" style="left:358px;top:343px;color:#000">error from ExampleClassOne::fun3</div>
<div class="a" style="left:0;top:361px;width:579px;height:18px;background:#f4f2ef"></div>
<div class="a" style="left:0;top:379px;width:579px;height:1px;background:#c9c5be"></div>
<div class="t" style="left:3px;top:362px;color:#000">ExampleClassOne</div>
<div class="t" style="left:137px;top:362px;color:#000">fun3</div>
<svg style="left:333px;top:362px" width="16" height="16" viewBox="0 0 16 16"><path d="M14.7 3L7.8 8L14.7 13Z M7.8 3L1 8L7.8 13Z" fill="#f6f6f4" stroke="#6a6a68" stroke-width="1" stroke-linejoin="round"/></svg>
<div class="a" style="left:0;top:380px;width:579px;height:18px;background:#fff"></div>
<div class="a" style="left:0;top:398px;width:579px;height:1px;background:#c9c5be"></div>
<div class="t" style="left:3px;top:381px;color:#000">ExampleClassTwo</div>
<div class="t" style="left:137px;top:381px;color:#000">fun3</div>
<svg style="left:333px;top:381px" width="16" height="16" viewBox="0 0 16 16"><path d="M1.3 3L8.2 8L1.3 13Z M8.2 3L15 8L8.2 13Z" fill="#f6f6f4" stroke="#6a6a68" stroke-width="1" stroke-linejoin="round"/></svg>
<div class="a" style="left:0;top:399px;width:579px;height:18px;background:#f4f2ef"></div>
<div class="a" style="left:0;top:417px;width:579px;height:1px;background:#c9c5be"></div>
<div class="t" style="left:3px;top:400px;color:#000">ExampleClassTwo</div>
<div class="t" style="left:137px;top:400px;color:#000">fun3</div>
<svg style="left:333px;top:400px" width="16" height="16" viewBox="0 0 16 16"><defs><radialGradient id="ig" cx="0.5" cy="0.3" r="0.7"><stop offset="0" stop-color="#a9c8ec"/><stop offset="1" stop-color="#3f73b6"/></radialGradient></defs><circle cx="8" cy="8" r="7.5" fill="url(#ig)" stroke="#3a68a8" stroke-width="1"/><circle cx="8" cy="4.3" r="1.3" fill="#fff"/><path d="M6 6.5H9V11.5H10V13H6V11.5H7V8H6Z" fill="#fff"/></svg>
<div class="t" style="left:358px;top:400px;color:#000">message from ExampleClassTwo::fun3</div>
<div class="a" style="left:0;top:418px;width:579px;height:18px;background:#fff"></div>
<div class="a" style="left:0;top:436px;width:579px;height:1px;background:#c9c5be"></div>
<div class="t" style="left:3px;top:419px;color:#000">ExampleClassTwo</div>
<div class="t" style="left:137px;top:419px;color:#000">fun3</div>
<svg style="left:333px;top:419px" width="16" height="16" viewBox="0 0 16 16"><defs><linearGradient id="wg" x1="0" y1="0" x2="0" y2="1"><stop offset="0" stop-color="#fff7a0"/><stop offset="1" stop-color="#f2e300"/></linearGradient></defs><path d="M8 1.5L15.2 14.2H0.8Z" fill="url(#wg)" stroke="#e06a00" stroke-width="1.2" stroke-linejoin="round"/><path d="M7.2 5H8.8L8.4 10.5H7.6Z" fill="#555"/><circle cx="8" cy="12.3" r="1" fill="#222"/></svg>
<div class="t" style="left:358px;top:419px;color:#000">warning from ExampleClassTwo::fun3</div>
<div class="a" style="left:0;top:437px;width:579px;height:18px;background:#f4f2ef"></div>
<div class="a" style="left:0;top:455px;width:579px;height:1px;background:#c9c5be"></div>
<div class="t" style="left:3px;top:438px;color:#000">ExampleClassTwo</div>
<div class="t" style="left:137px;top:438px;color:#000">fun3</div>
<svg style="left:333px;top:438px" width="16" height="16" viewBox="0 0 16 16"><defs><radialGradient id="eg" cx="0.5" cy="0.35" r="0.7"><stop offset="0" stop-color="#ff9090"/><stop offset="0.6" stop-color="#ec1c1c"/><stop offset="1" stop-color="#d00000"/></radialGradient></defs><circle cx="8" cy="8" r="7.5" fill="url(#eg)" stroke="#b80000" stroke-width="1"/><path d="M4.6 4.6L11.4 11.4M11.4 4.6L4.6 11.4" stroke="#fff" stroke-width="2.8"/></svg>
<div class="t" style="left:358px;top:438px;color:#000">error from ExampleClassTwo::fun3</div>
<div class="a" style="left:0;top:456px;width:579px;height:18px;background:#fff"></div>
<div class="a" style="left:0;top:474px;width:579px;height:1px;background:#c9c5be"></div>
<div class="t" style="left:3px;top:457px;color:#000">ExampleClassTwo</div>
<div class="t" style="left:137px;top:457px;color:#000">fun3</div>
<svg style="left:333px;top:457px" width="16" height="16" viewBox="0 0 16 16"><path d="M14.7 3L7.8 8L14.7 13Z M7.8 3L1 8L7.8 13Z" fill="#f6f6f4" stroke="#6a6a68" stroke-width="1" stroke-linejoin="round"/></svg>
<div class="a" style="left:0;top:475px;width:579px;height:18px;background:#f4f2ef"></div>
<div class="a" style="left:0;top:493px;width:579px;height:1px;background:#c9c5be"></div>
<div class="t" style="left:3px;top:476px;color:#000">unix_client</div>
<div class="t" style="left:137px;top:476px;color:#000">main</div>
<svg style="left:333px;top:476px" width="16" height="16" viewBox="0 0 16 16"><defs><radialGradient id="ig" cx="0.5" cy="0.3" r="0.7"><stop offset="0" stop-color="#a9c8ec"/><stop offset="1" stop-color="#3f73b6"/></radialGradient></defs><circle cx="8" cy="8" r="7.5" fill="url(#ig)" stroke="#3a68a8" stroke-width="1"/><circle cx="8" cy="4.3" r="1.3" fill="#fff"/><path d="M6 6.5H9V11.5H10V13H6V11.5H7V8H6Z" fill="#fff"/></svg>
<div class="t" style="left:358px;top:476px;color:#000">End of program</div>
<div class="a" style="left:0;top:494px;width:579px;height:18px;background:#fff"></div>
<div class="a" style="left:0;top:512px;width:579px;height:1px;background:#c9c5be"></div>
<div class="t" style="left:3px;top:495px;color:#000">ExampleClassTwo</div>
<div class="t" style="left:137px;top:495px;color:#000">Destructor_ExampleClassTwo</div>
<svg style="left:333px;top:495px" width="16" height="16" viewBox="0 0 16 16"><path d="M1.3 3L8.2 8L1.3 13Z M8.2 3L15 8L8.2 13Z" fill="#f6f6f4" stroke="#6a6a68" stroke-width="1" stroke-linejoin="round"/></svg>
<div class="a" style="left:0;top:513px;width:579px;height:18px;background:#f4f2ef"></div>
<div class="a" style="left:0;top:531px;width:579px;height:1px;background:#c9c5be"></div>
<div class="t" style="left:3px;top:514px;color:#000">ExampleClassTwo</div>
<div class="t" style="left:137px;top:514px;color:#000">Destructor_ExampleClassTwo</div>
<svg style="left:333px;top:514px" width="16" height="16" viewBox="0 0 16 16"><defs><radialGradient id="ig" cx="0.5" cy="0.3" r="0.7"><stop offset="0" stop-color="#a9c8ec"/><stop offset="1" stop-color="#3f73b6"/></radialGradient></defs><circle cx="8" cy="8" r="7.5" fill="url(#ig)" stroke="#3a68a8" stroke-width="1"/><circle cx="8" cy="4.3" r="1.3" fill="#fff"/><path d="M6 6.5H9V11.5H10V13H6V11.5H7V8H6Z" fill="#fff"/></svg>
<div class="t" style="left:358px;top:514px;color:#000">Destructor of ExampleClassTwo</div>
<div class="a" style="left:0;top:532px;width:579px;height:18px;background:#fff"></div>
<div class="a" style="left:0;top:550px;width:579px;height:1px;background:#c9c5be"></div>
<div class="t" style="left:3px;top:533px;color:#000">ExampleClassTwo</div>
<div class="t" style="left:137px;top:533px;color:#000">Destructor_ExampleClassTwo</div>
<svg style="left:333px;top:533px" width="16" height="16" viewBox="0 0 16 16"><path d="M14.7 3L7.8 8L14.7 13Z M7.8 3L1 8L7.8 13Z" fill="#f6f6f4" stroke="#6a6a68" stroke-width="1" stroke-linejoin="round"/></svg>
<div class="a" style="left:0;top:551px;width:579px;height:18px;background:#f4f2ef"></div>
<div class="a" style="left:0;top:569px;width:579px;height:1px;background:#c9c5be"></div>
<div class="t" style="left:3px;top:552px;color:#000">ExampleClassOne</div>
<div class="t" style="left:137px;top:552px;color:#000">Destructor_ExampleClassOne</div>
<svg style="left:333px;top:552px" width="16" height="16" viewBox="0 0 16 16"><path d="M1.3 3L8.2 8L1.3 13Z M8.2 3L15 8L8.2 13Z" fill="#f6f6f4" stroke="#6a6a68" stroke-width="1" stroke-linejoin="round"/></svg>
<div class="a" style="left:0;top:570px;width:579px;height:18px;background:#fff"></div>
<div class="a" style="left:0;top:588px;width:579px;height:1px;background:#c9c5be"></div>
<div class="t" style="left:3px;top:571px;color:#000">ExampleClassOne</div>
<div class="t" style="left:137px;top:571px;color:#000">Destructor_ExampleClassOne</div>
<svg style="left:333px;top:571px" width="16" height="16" viewBox="0 0 16 16"><defs><radialGradient id="ig" cx="0.5" cy="0.3" r="0.7"><stop offset="0" stop-color="#a9c8ec"/><stop offset="1" stop-color="#3f73b6"/></radialGradient></defs><circle cx="8" cy="8" r="7.5" fill="url(#ig)" stroke="#3a68a8" stroke-width="1"/><circle cx="8" cy="4.3" r="1.3" fill="#fff"/><path d="M6 6.5H9V11.5H10V13H6V11.5H7V8H6Z" fill="#fff"/></svg>
<div class="t" style="left:358px;top:571px;color:#000">Destructor of ExampleClassOne</div>
<div class="a" style="left:0;top:589px;width:579px;height:18px;background:#f4f2ef"></div>
<div class="a" style="left:0;top:607px;width:579px;height:1px;background:#c9c5be"></div>
<div class="t" style="left:3px;top:590px;color:#000">ExampleClassOne</div>
<div class="t" style="left:137px;top:590px;color:#000">Destructor_ExampleClassOne</div>
<svg style="left:333px;top:590px" width="16" height="16" viewBox="0 0 16 16"><path d="M14.7 3L7.8 8L14.7 13Z M7.8 3L1 8L7.8 13Z" fill="#f6f6f4" stroke="#6a6a68" stroke-width="1" stroke-linejoin="round"/></svg>
<div class="a" style="left:0;top:608px;width:579px;height:18px;background:#fff"></div>
<div class="a" style="left:0;top:626px;width:579px;height:1px;background:#c9c5be"></div>
<div class="t" style="left:3px;top:609px;color:#000">unix_client</div>
<div class="t" style="left:137px;top:609px;color:#000">main</div>
<svg style="left:333px;top:609px" width="16" height="16" viewBox="0 0 16 16"><path d="M14.7 3L7.8 8L14.7 13Z M7.8 3L1 8L7.8 13Z" fill="#f6f6f4" stroke="#6a6a68" stroke-width="1" stroke-linejoin="round"/></svg>
<div class="a" style="left:133px;top:0;width:1px;height:627px;background:#c9c5be"></div>
<div class="a" style="left:329px;top:0;width:1px;height:627px;background:#c9c5be"></div>
<div class="a" style="left:353px;top:0;width:1px;height:627px;background:#c9c5be"></div>
<div class="a" style="left:133px;top:323px;width:196px;height:18px;border:1px dotted #3a5f8a;opacity:0.7"></div>
</div>
<div class="a" style="left:864px;top:104px;width:15px;height:634px;background:#d6d0c6;border-left:1px solid #8c867c;border-right:1px solid #8c867c"></div>
<div class="a" style="left:864px;top:343px;width:15px;height:396px;border:1px solid #8c867c;background:linear-gradient(90deg,#fbfaf8,#e7e3dd)"></div>
<div class="a" style="left:864px;top:89px;width:15px;height:15px;border:1px solid #8c867c;border-radius:3px 3px 0 0;background:linear-gradient(135deg,#ffffff,#e4e0da)"></div>
<svg style="left:868px;top:95px" width="7" height="4"><path d="M0 4L3.5 0L7 4Z" fill="#000"/></svg>
<div class="a" style="left:864px;top:738px;width:15px;height:15px;border:1px solid #8c867c;border-radius:0 0 3px 3px;background:linear-gradient(135deg,#ffffff,#e4e0da)"></div>
<svg style="left:868px;top:744px" width="7" height="4"><path d="M0 0L3.5 4L7 0Z" fill="#000"/></svg>
<div class="a" style="left:871px;top:536px;width:1px;height:1px"></div>
<div class="a" style="left:868px;top:537px;width:7px;height:1px;background:#b3aca1"></div><div class="a" style="left:868px;top:538px;width:7px;height:1px;background:#fff"></div>
<div class="a" style="left:868px;top:540px;width:7px;height:1px;background:#b3aca1"></div><div class="a" style="left:868px;top:541px;width:7px;height:1px;background:#fff"></div>
<div class="a" style="left:868px;top:543px;width:7px;height:1px;background:#b3aca1"></div><div class="a" style="left:868px;top:544px;width:7px;height:1px;background:#fff"></div>
<div class="a" style="left:299px;top:753px;width:552px;height:15px;background:#d6d0c6;border-top:1px solid #8c867c;border-bottom:1px solid #8c867c"></div>
<div class="a" style="left:299px;top:753px;width:413px;height:15px;border:1px solid #8c867c;background:linear-gradient(#fbfaf8,#e7e3dd)"></div>
<div class="a" style="left:502px;top:757px;width:1px;height:7px;background:#b3aca1"></div><div class="a" style="left:503px;top:757px;width:1px;height:7px;background:#fff"></div>
<div class="a" style="left:505px;top:757px;width:1px;height:7px;background:#b3aca1"></div><div class="a" style="left:506px;top:757px;width:1px;height:7px;background:#fff"></div>
<div class="a" style="left:508px;top:757px;width:1px;height:7px;background:#b3aca1"></div><div class="a" style="left:509px;top:757px;width:1px;height:7px;background:#fff"></div>
<div class="a" style="left:285px;top:753px;width:15px;height:15px;border:1px solid #8c867c;border-radius:3px 0 0 3px;background:linear-gradient(135deg,#ffffff,#e4e0da)"></div>
<svg style="left:290px;top:757px" width="4" height="7"><path d="M4 0L0 3.5L4 7Z" fill="#000"/></svg>
<div class="a" style="left:849px;top:753px;width:15px;height:15px;border:1px solid #8c867c;border-radius:0 3px 3px 0;background:linear-gradient(135deg,#ffffff,#e4e0da)"></div>
<svg style="left:855px;top:757px" width="4" height="7"><path d="M0 0L4 3.5L0 7Z" fill="#000"/></svg>
<div class="t" style="left:12px;top:773px;letter-spacing:0.4px;word-spacing:0.8px">Connected - A connection is established.</div>
<svg style="left:863px;top:774px" width="19" height="19"><path d="M1.5 18.5L18.5 1.5M5.5 18.5L18.5 5.5M9.5 18.5L18.5 9.5M13.5 18.5L18.5 13.5" stroke="#b6b2aa" stroke-width="1" stroke-dasharray="1.41 1.41"/><path d="M2.5 18.5L18.5 2.5M6.5 18.5L18.5 6.5M10.5 18.5L18.5 10.5M14.5 18.5L18.5 14.5" stroke="#fff" stroke-width="1" stroke-dasharray="1.41 1.41"/></svg></body></html>
